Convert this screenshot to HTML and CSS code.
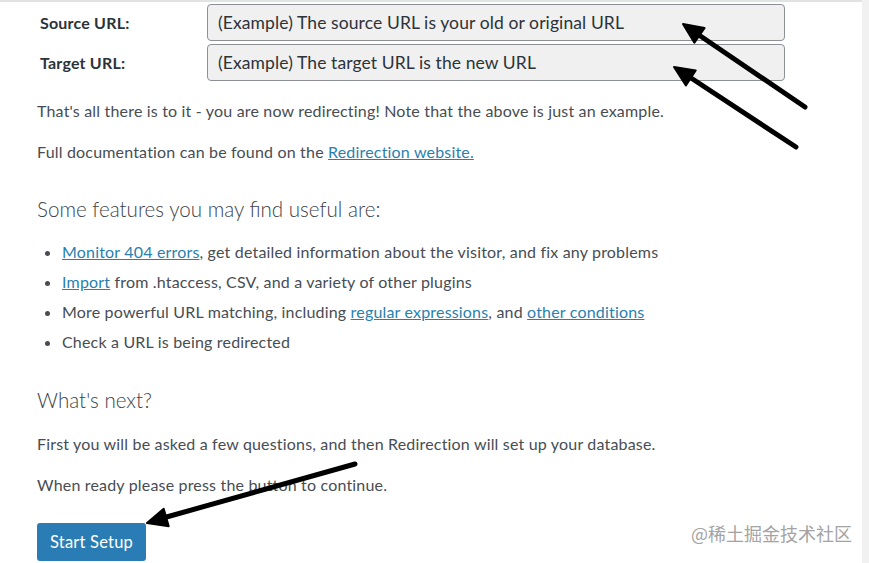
FILE: index.html
```html
<!DOCTYPE html>
<html lang="en">
<head>
<meta charset="utf-8">
<title>Redirection Setup</title>
<link rel="stylesheet" href="styles.css">
</head>
<body>
<div class="page">
  <main class="card">
    <div class="form">
      <div class="row">
        <label class="label">Source URL:</label>
        <div class="input">(Example) The source URL is your old or original URL</div>
      </div>
      <div class="row">
        <label class="label">Target URL:</label>
        <div class="input">(Example) The target URL is the new URL</div>
      </div>
    </div>
    <p class="p p-first">That's all there is to it - you are now redirecting! Note that the above is just an example.</p>
    <p class="p">Full documentation can be found on the <a href="#">Redirection website.</a></p>
    <h2 class="h">Some features you may find useful are:</h2>
    <ul class="list">
      <li><a href="#">Monitor 404 errors</a>, get detailed information about the visitor, and fix any problems</li>
      <li><a href="#">Import</a> from .htaccess, CSV, and a variety of other plugins</li>
      <li>More powerful URL matching, including <a href="#">regular expressions</a>, and <a href="#">other conditions</a></li>
      <li>Check a URL is being redirected</li>
    </ul>
    <h2 class="h h-next">What's next?</h2>
    <p class="p p-q">First you will be asked a few questions, and then Redirection will set up your database.</p>
    <p class="p p-last">When ready please press the button to continue.</p>
    <button class="btn">Start Setup</button>
  </main>
  <aside class="side"></aside>
</div>
<div class="watermark">@稀土掘金技术社区</div>
<svg class="arrows" width="869" height="563" viewBox="0 0 869 563">
  <g stroke="#000" stroke-width="5" stroke-linecap="round" fill="#000">
    <line x1="805" y1="107" x2="696" y2="33"/>
    <polygon points="683,24 704.6,28 694.4,42.8" stroke-width="2" stroke-linejoin="round"/>
    <line x1="796" y1="147" x2="688" y2="76"/>
    <polygon points="674,67 695.7,70.4 685.9,85.4" stroke-width="2" stroke-linejoin="round"/>
    <line x1="355" y1="464" x2="163" y2="518"/>
    <polygon points="147,523 168.7,526.2 163.7,508.8" stroke-width="2" stroke-linejoin="round"/>
  </g>
</svg>
</body>
</html>
```
FILE: styles.css
```css
html, body {
  margin: 0;
  padding: 0;
  background: #fff;
}
body {
  font-family: Lato, "Noto Sans", sans-serif;
  color: #474d53;
  width: 869px;
  height: 563px;
  overflow: hidden;
  position: relative;
  letter-spacing: 0.18px;
}
.page {
  display: flex;
  height: 563px;
}
.card {
  flex: 1;
  border-top: 2px solid #e2e2e2;
  padding: 2px 0 0 37px;
  box-sizing: border-box;
}
.side {
  width: 7px;
  background: #f1f1f1;
}
.form {
  display: flex;
  flex-direction: column;
  gap: 3px;
}
.row {
  display: flex;
  align-items: center;
}
.label {
  width: 167px;
  padding-left: 3px;
  font-weight: 700;
  font-size: 16px;
  color: #2c3338;
  letter-spacing: 0.2px;
}
.input {
  width: 578px;
  height: 37px;
  box-sizing: border-box;
  border: 1px solid #8c8f94;
  border-radius: 4px;
  background: #f0f0f1;
  font-size: 17.5px;
  color: #2c3338;
  padding: 0 10px;
  display: flex;
  align-items: center;
  letter-spacing: 0.1px;
}
.p {
  font-size: 16px;
  line-height: 20px;
  margin: 21px 0 0;
}
.p-first {
  margin-top: 20px;
}
a {
  color: #2a7fae;
  text-decoration: underline;
}
.h {
  font-weight: 300;
  font-size: 20.6px;
  line-height: 28px;
  margin: 33px 0 0;
  color: #3c434a;
  letter-spacing: 0;
}
.list {
  margin: 19px 0 0;
  padding: 0 0 0 25px;
  font-size: 16px;
  line-height: 20px;
}
.list li {
  margin-bottom: 10px;
}
.h-next {
  margin-top: 34px;
}
.p-q {
  margin-top: 20px;
}
.p-last {
  margin-top: 21px;
}
.btn {
  margin-top: 28px;
  background: #2a7db4;
  color: #fff;
  border: none;
  border-radius: 3px;
  font-family: Lato, "Noto Sans", sans-serif;
  font-size: 16.5px;
  letter-spacing: 0.2px;
  height: 38px;
  width: 109px;
  padding: 0;
}
.watermark {
  position: absolute;
  right: 17px;
  bottom: 17px;
  font-family: "Noto Sans CJK SC", sans-serif;
  font-size: 18px;
  color: #a3a3a3;
  letter-spacing: 0;
}
.arrows {
  position: absolute;
  left: 0;
  top: 0;
  pointer-events: none;
}
```
